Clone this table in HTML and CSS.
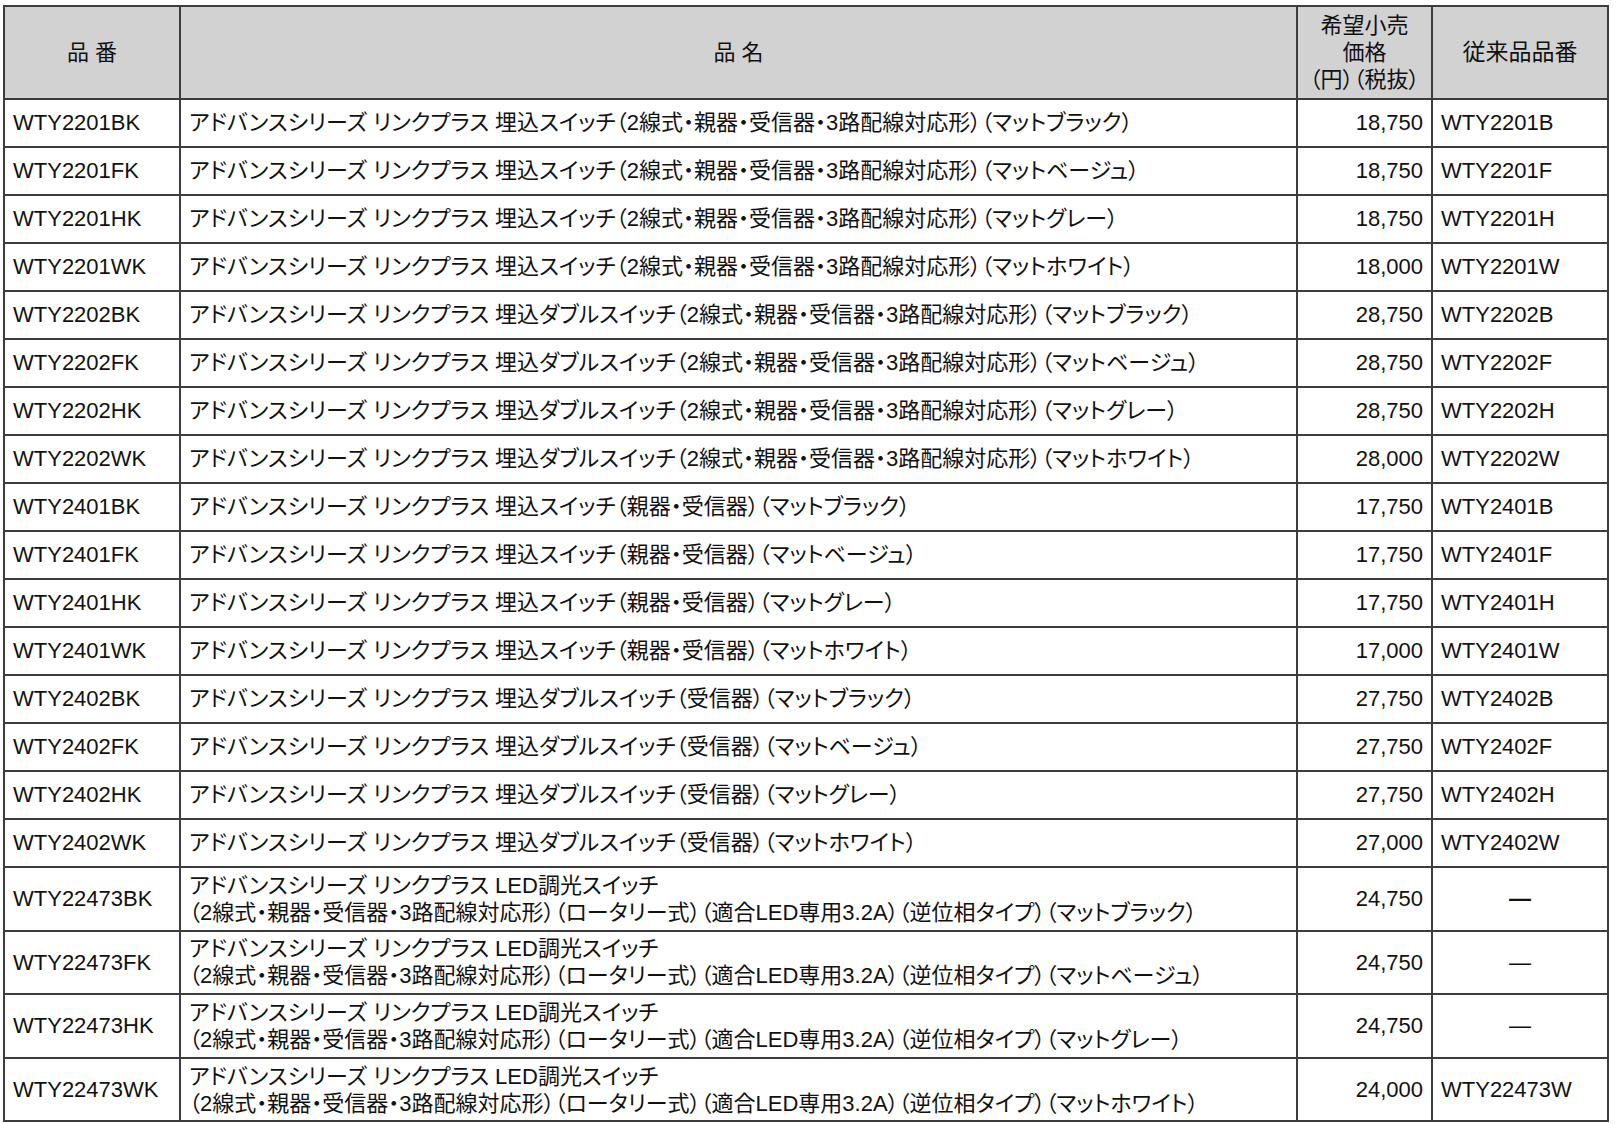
FILE: index.html
```html
<!DOCTYPE html>
<html lang="ja">
<head>
<meta charset="utf-8">
<title>リンクプラス 価格表</title>
<link rel="stylesheet" href="styles.css">
</head>
<body>
<table class="price-table">
  <colgroup>
    <col class="c-code">
    <col class="c-name">
    <col class="c-price">
    <col class="c-old">
  </colgroup>
  <thead>
    <tr>
      <th class="h-bold">品 番</th>
      <th class="h-bold">品 名</th>
      <th class="h-price">希望小売<br>価格<br>（円）（税抜）</th>
      <th class="h-old">従来品品番</th>
    </tr>
  </thead>
  <tbody>
    <tr><td>WTY2201BK</td><td>アドバンスシリーズ リンクプラス 埋込スイッチ（2線式・親器・受信器・3路配線対応形）（マットブラック）</td><td class="price">18,750</td><td>WTY2201B</td></tr>
    <tr><td>WTY2201FK</td><td>アドバンスシリーズ リンクプラス 埋込スイッチ（2線式・親器・受信器・3路配線対応形）（マットベージュ）</td><td class="price">18,750</td><td>WTY2201F</td></tr>
    <tr><td>WTY2201HK</td><td>アドバンスシリーズ リンクプラス 埋込スイッチ（2線式・親器・受信器・3路配線対応形）（マットグレー）</td><td class="price">18,750</td><td>WTY2201H</td></tr>
    <tr><td>WTY2201WK</td><td>アドバンスシリーズ リンクプラス 埋込スイッチ（2線式・親器・受信器・3路配線対応形）（マットホワイト）</td><td class="price">18,000</td><td>WTY2201W</td></tr>
    <tr><td>WTY2202BK</td><td>アドバンスシリーズ リンクプラス 埋込ダブルスイッチ（2線式・親器・受信器・3路配線対応形）（マットブラック）</td><td class="price">28,750</td><td>WTY2202B</td></tr>
    <tr><td>WTY2202FK</td><td>アドバンスシリーズ リンクプラス 埋込ダブルスイッチ（2線式・親器・受信器・3路配線対応形）（マットベージュ）</td><td class="price">28,750</td><td>WTY2202F</td></tr>
    <tr><td>WTY2202HK</td><td>アドバンスシリーズ リンクプラス 埋込ダブルスイッチ（2線式・親器・受信器・3路配線対応形）（マットグレー）</td><td class="price">28,750</td><td>WTY2202H</td></tr>
    <tr><td>WTY2202WK</td><td>アドバンスシリーズ リンクプラス 埋込ダブルスイッチ（2線式・親器・受信器・3路配線対応形）（マットホワイト）</td><td class="price">28,000</td><td>WTY2202W</td></tr>
    <tr><td>WTY2401BK</td><td>アドバンスシリーズ リンクプラス 埋込スイッチ（親器・受信器）（マットブラック）</td><td class="price">17,750</td><td>WTY2401B</td></tr>
    <tr><td>WTY2401FK</td><td>アドバンスシリーズ リンクプラス 埋込スイッチ（親器・受信器）（マットベージュ）</td><td class="price">17,750</td><td>WTY2401F</td></tr>
    <tr><td>WTY2401HK</td><td>アドバンスシリーズ リンクプラス 埋込スイッチ（親器・受信器）（マットグレー）</td><td class="price">17,750</td><td>WTY2401H</td></tr>
    <tr><td>WTY2401WK</td><td>アドバンスシリーズ リンクプラス 埋込スイッチ（親器・受信器）（マットホワイト）</td><td class="price">17,000</td><td>WTY2401W</td></tr>
    <tr><td>WTY2402BK</td><td>アドバンスシリーズ リンクプラス 埋込ダブルスイッチ（受信器）（マットブラック）</td><td class="price">27,750</td><td>WTY2402B</td></tr>
    <tr><td>WTY2402FK</td><td>アドバンスシリーズ リンクプラス 埋込ダブルスイッチ（受信器）（マットベージュ）</td><td class="price">27,750</td><td>WTY2402F</td></tr>
    <tr><td>WTY2402HK</td><td>アドバンスシリーズ リンクプラス 埋込ダブルスイッチ（受信器）（マットグレー）</td><td class="price">27,750</td><td>WTY2402H</td></tr>
    <tr><td>WTY2402WK</td><td>アドバンスシリーズ リンクプラス 埋込ダブルスイッチ（受信器）（マットホワイト）</td><td class="price">27,000</td><td>WTY2402W</td></tr>
    <tr class="tall"><td>WTY22473BK</td><td>アドバンスシリーズ リンクプラス LED調光スイッチ<br>（2線式・親器・受信器・3路配線対応形）（ロータリー式）（適合LED専用3.2A）（逆位相タイプ）（マットブラック）</td><td class="price">24,750</td><td class="none bold-dash">—</td></tr>
    <tr class="tall"><td>WTY22473FK</td><td>アドバンスシリーズ リンクプラス LED調光スイッチ<br>（2線式・親器・受信器・3路配線対応形）（ロータリー式）（適合LED専用3.2A）（逆位相タイプ）（マットベージュ）</td><td class="price">24,750</td><td class="none">—</td></tr>
    <tr class="tall"><td>WTY22473HK</td><td>アドバンスシリーズ リンクプラス LED調光スイッチ<br>（2線式・親器・受信器・3路配線対応形）（ロータリー式）（適合LED専用3.2A）（逆位相タイプ）（マットグレー）</td><td class="price">24,750</td><td class="none">—</td></tr>
    <tr class="tall"><td>WTY22473WK</td><td>アドバンスシリーズ リンクプラス LED調光スイッチ<br>（2線式・親器・受信器・3路配線対応形）（ロータリー式）（適合LED専用3.2A）（逆位相タイプ）（マットホワイト）</td><td class="price">24,000</td><td>WTY22473W</td></tr>
  </tbody>
</table>
</body>
</html>
```

FILE: styles.css
```css
html, body {
  margin: 0;
  padding: 0;
  background: #ffffff;
}

body {
  padding: 5px 0 0 3px;
  font-family: "Liberation Sans", "Noto Sans CJK JP", sans-serif;
  font-feature-settings: "palt";
  color: #111111;
}

.price-table {
  border-collapse: collapse;
  table-layout: fixed;
  width: 1604px;
  font-size: 22px;
}

.c-code { width: 176px; }
.c-name { width: 1117px; }
.c-price { width: 135px; }
.c-old { width: 176px; }

.price-table th,
.price-table td {
  border: 2px solid #3c3c3c;
  padding: 0 8px;
  white-space: nowrap;
  overflow: hidden;
}

.price-table th {
  background: #d2d2d2;
  height: 91px;
  text-align: center;
  vertical-align: middle;
  font-weight: 400;
  line-height: 27px;
}

.h-bold {
  font-weight: 700;
  font-size: 22px;
  padding-top: 4px;
}

.h-price {
  font-size: 22px;
}

.h-old {
  font-size: 23px;
}

.price-table td {
  height: 46px;
  vertical-align: middle;
  text-align: left;
  line-height: 24px;
}

.price-table tr.tall td {
  height: 61.6px;
  line-height: 27px;
}

.price-table td.price {
  text-align: right;
}

.price-table td.none {
  text-align: center;
  font-weight: 400;
}

.price-table td.bold-dash {
  font-weight: 700;
}
```
